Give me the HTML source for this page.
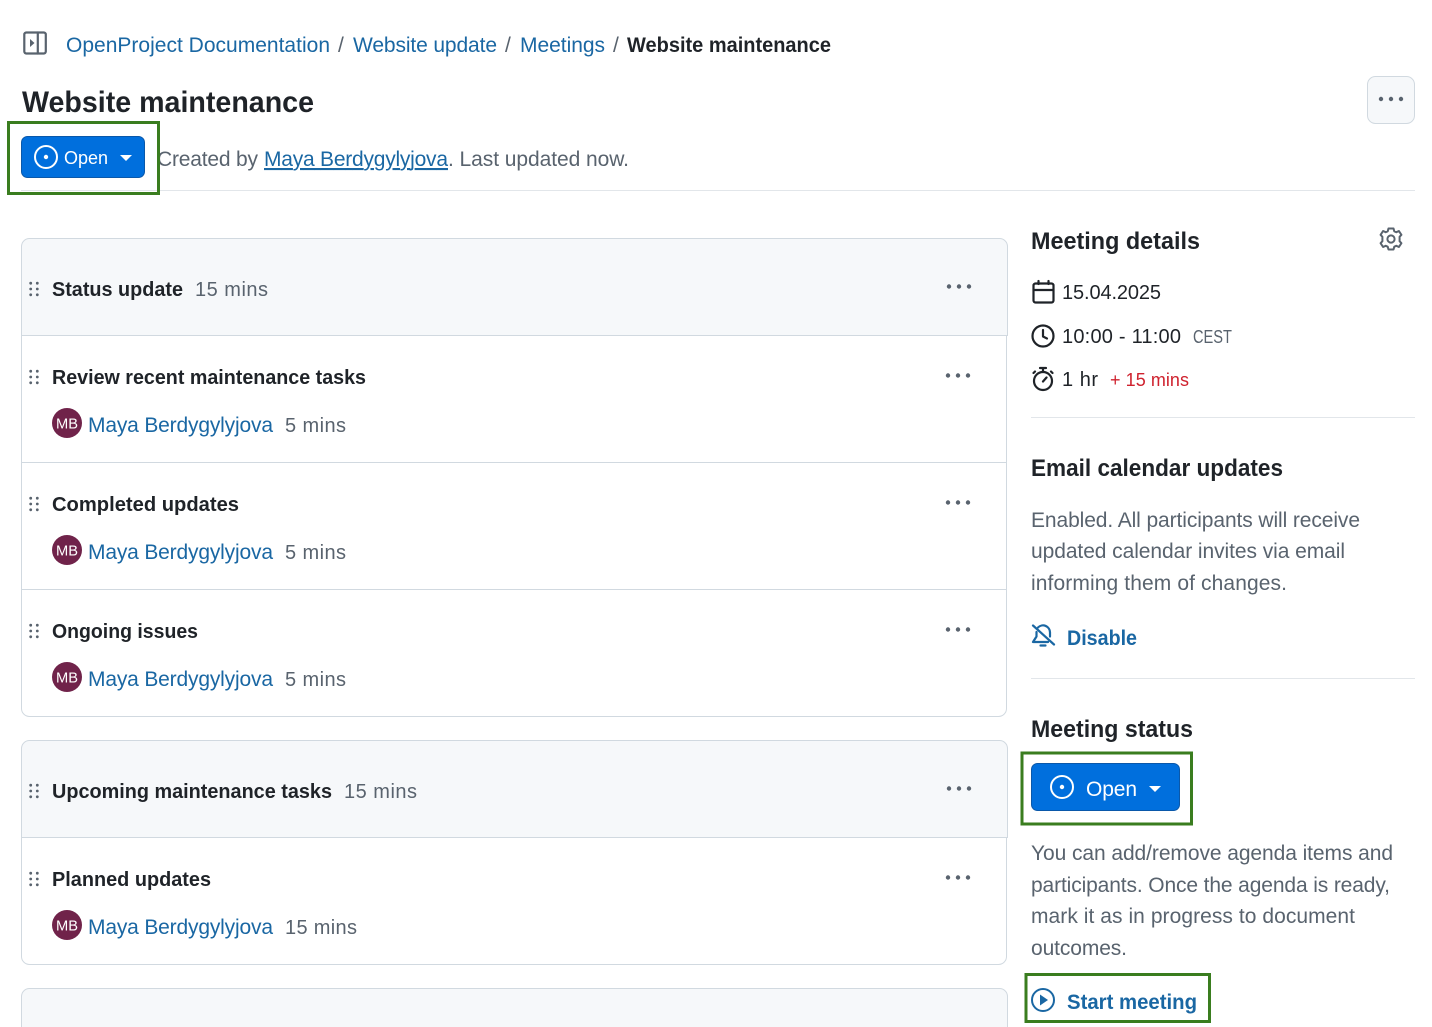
<!DOCTYPE html>
<html lang="en"><head><meta charset="utf-8"><title>Website maintenance</title>
<style>
html,body{margin:0;padding:0;background:#fff;width:1432px;height:1027px;overflow:hidden}
svg{display:block;font-family:"Liberation Sans",sans-serif;font-size:20px}
.l{fill:#1a67a3}.t{fill:#1f2328}.m{fill:#59636e}
.b{font-weight:bold}
.c{fill:none;stroke:#d1d9e0;stroke-width:1}
.i{fill:none;stroke-linecap:round;stroke-linejoin:round}
</style></head><body>
<svg width="1432" height="1027" viewBox="0 0 1432 1027" xmlns="http://www.w3.org/2000/svg">
<defs>
<g id="grip" fill="#59636e"><circle cx="-3.300" cy="-5.800" r="1.400"/><circle cx="3.300" cy="-5.800" r="1.400"/><circle cx="-3.300" cy="0" r="1.400"/><circle cx="3.300" cy="0" r="1.400"/><circle cx="-3.300" cy="5.800" r="1.400"/><circle cx="3.300" cy="5.800" r="1.400"/></g>
<g id="dots" fill="#59636e"><circle cx="-10" cy="0" r="2.200"/><circle cx="0" cy="0" r="2.200"/><circle cx="10" cy="0" r="2.200"/></g>
<g id="av"><circle cx="0" cy="0" r="15" fill="#70234a"/><text x="0" y="5.500" text-anchor="middle" font-size="15" fill="#fff" textLength="22" lengthAdjust="spacingAndGlyphs">MB</text></g>
</defs>

<!-- sidebar toggle -->
<g class="i" stroke="#59636e" stroke-width="2.200"><rect x="24.300" y="32.500" width="21.500" height="21" rx="2"/><path d="M37.800 32.500V53.500"/></g>
<path d="M30 39l4.500 4-4.500 4z" fill="#59636e"/>

<!-- breadcrumb -->
<text x="66" y="52" font-size="21" class="l" textLength="264">OpenProject Documentation</text>
<text x="338" y="52" font-size="21" class="m">/</text>
<text x="353" y="52" font-size="21" class="l" textLength="144">Website update</text>
<text x="505" y="52" font-size="21" class="m">/</text>
<text x="520" y="52" font-size="21" class="l" textLength="85">Meetings</text>
<text x="613" y="52" font-size="21" class="m">/</text>
<text x="627" y="52" font-size="21" class="t b" textLength="204" lengthAdjust="spacingAndGlyphs">Website maintenance</text>

<!-- title -->
<text x="22" y="112" font-size="30" class="t b" textLength="292" lengthAdjust="spacingAndGlyphs">Website maintenance</text>

<!-- more button -->
<rect x="1367.500" y="76.500" width="47" height="47" rx="8" fill="#f6f8fa" stroke="#d1d9e0"/>
<use href="#dots" x="1391" y="99"/>

<!-- open button top -->
<rect x="21.500" y="136.500" width="123" height="41" rx="6" fill="#006fdd" stroke="#0a58aa"/>
<circle cx="46" cy="157" r="11" class="i" stroke="#fff" stroke-width="2"/><circle cx="46" cy="157" r="2.200" fill="#fff"/>
<text x="64" y="164" font-size="18" fill="#fff" textLength="44">Open</text>
<path d="M120 155h12l-6 6z" fill="#fff"/>

<!-- meta -->
<text x="157" y="166" class="m" font-size="21" textLength="101">Created by</text>
<text x="264" y="166" class="l" font-size="21" textLength="184" text-decoration="underline">Maya Berdygylyjova</text>
<text x="448" y="166" class="m" font-size="21" textLength="181">. Last updated now.</text>
<rect x="21" y="190" width="1394" height="1" fill="#e2e6ea"/>

<!-- green boxes -->
<g fill="none" stroke="#3a7d1f" stroke-width="3">
<rect x="8.500" y="122.500" width="150" height="71"/>
<rect x="1022" y="753" width="169.500" height="71"/>
<rect x="1026" y="974.500" width="183.500" height="47"/>
</g>

<!-- card 1 -->
<path d="M21.500 335.500V246.500a8 8 0 0 1 8-8H999.500a8 8 0 0 1 8 8V335.500z" fill="#f6f8fa" stroke="#d1d9e0"/>
<path d="M21.500 336V708.500a8 8 0 0 0 8 8H998.500a8 8 0 0 0 8-8V336" class="c"/>
<path d="M22 462.500H1006M22 589.500H1006" class="c"/>
<use href="#grip" x="34" y="289"/>
<text x="52" y="296" class="t b" textLength="131" lengthAdjust="spacingAndGlyphs">Status update</text>
<text x="195" y="296" class="m" textLength="73">15 mins</text>
<use href="#dots" x="959" y="286.500"/>

<use href="#grip" x="34" y="377"/>
<text x="52" y="384" class="t b" textLength="314" lengthAdjust="spacingAndGlyphs">Review recent maintenance tasks</text>
<use href="#dots" x="958" y="375.500"/>
<use href="#av" x="67" y="423"/>
<text x="88" y="432" font-size="21" class="l" textLength="185">Maya Berdygylyjova</text>
<text x="285" y="432" class="m" textLength="61">5 mins</text>

<use href="#grip" x="34" y="504"/>
<text x="52" y="511" class="t b" textLength="187" lengthAdjust="spacingAndGlyphs">Completed updates</text>
<use href="#dots" x="958" y="502.500"/>
<use href="#av" x="67" y="550"/>
<text x="88" y="559" font-size="21" class="l" textLength="185">Maya Berdygylyjova</text>
<text x="285" y="559" class="m" textLength="61">5 mins</text>

<use href="#grip" x="34" y="631"/>
<text x="52" y="638" class="t b" textLength="146" lengthAdjust="spacingAndGlyphs">Ongoing issues</text>
<use href="#dots" x="958" y="629.500"/>
<use href="#av" x="67" y="677"/>
<text x="88" y="686" font-size="21" class="l" textLength="185">Maya Berdygylyjova</text>
<text x="285" y="686" class="m" textLength="61">5 mins</text>

<!-- card 2 -->
<path d="M21.500 837.500V748.500a8 8 0 0 1 8-8H999.500a8 8 0 0 1 8 8V837.500z" fill="#f6f8fa" stroke="#d1d9e0"/>
<path d="M21.500 838V956.500a8 8 0 0 0 8 8H998.500a8 8 0 0 0 8-8V838" class="c"/>
<use href="#grip" x="34" y="791"/>
<text x="52" y="798" class="t b" textLength="280" lengthAdjust="spacingAndGlyphs">Upcoming maintenance tasks</text>
<text x="344" y="798" class="m" textLength="73">15 mins</text>
<use href="#dots" x="959" y="788.500"/>
<use href="#grip" x="34" y="879"/>
<text x="52" y="886" class="t b" textLength="159" lengthAdjust="spacingAndGlyphs">Planned updates</text>
<use href="#dots" x="958" y="877.500"/>
<use href="#av" x="67" y="925"/>
<text x="88" y="934" font-size="21" class="l" textLength="185">Maya Berdygylyjova</text>
<text x="285" y="934" class="m" textLength="72">15 mins</text>

<!-- card 3 -->
<path d="M21.500 1028V996.500a8 8 0 0 1 8-8H999.500a8 8 0 0 1 8 8V1028z" fill="#f6f8fa" stroke="#d1d9e0"/>

<!-- sidebar -->
<text x="1031" y="249" font-size="24" class="t b" textLength="169" lengthAdjust="spacingAndGlyphs">Meeting details</text>
<g class="i" stroke="#59636e" stroke-width="2" transform="translate(1391 239)">
<circle r="3.600"/>
<path d="M-2.500-10.500h5l.8 2.800 2 .9 2.600-1.200 2.500 3.800-1.800 2v4.400l1.800 2-2.500 3.800-2.600-1.200-2 .9-.8 2.800h-5l-.8-2.800-2-.9-2.600 1.200-2.500-3.800 1.800-2v-4.400l-1.800-2 2.500-3.800 2.600 1.200 2-.9z"/>
</g>

<g class="i" stroke="#1f2328" stroke-width="2.200"><rect x="1033.500" y="283.500" width="20" height="19" rx="2"/><path d="M1033.500 290H1053.500M1038.500 281V284M1048.500 281V284"/></g>
<text x="1062" y="299" class="t" textLength="99">15.04.2025</text>
<circle cx="1043" cy="336" r="10.500" class="i" stroke="#1f2328" stroke-width="2.200"/>
<path d="M1043 330v6.500l4 2" class="i" stroke="#1f2328" stroke-width="2.200"/>
<text x="1062" y="343" class="t" textLength="119">10:00 - 11:00</text>
<text x="1193" y="343" font-size="18" class="m" textLength="39" lengthAdjust="spacingAndGlyphs">CEST</text>
<circle cx="1043" cy="381" r="9" class="i" stroke="#1f2328" stroke-width="2.200"/>
<path d="M1040 368h6M1043 368v3.500M1051 371.500l1.500 1.500M1035 371.500l-1.500 1.500M1043 381.500l3.500-4" class="i" stroke="#1f2328" stroke-width="2.200"/>
<text x="1062" y="386" class="t" textLength="36">1 hr</text>
<text x="1110" y="386" font-size="18" fill="#cf222e" textLength="79">+ 15 mins</text>
<rect x="1031" y="417" width="384" height="1" fill="#e2e6ea"/>

<text x="1031" y="476" font-size="24" class="t b" textLength="252" lengthAdjust="spacingAndGlyphs">Email calendar updates</text>
<text x="1031" y="527" font-size="21" class="m" textLength="329">Enabled. All participants will receive</text>
<text x="1031" y="558" font-size="21" class="m" textLength="314">updated calendar invites via email</text>
<text x="1031" y="590" font-size="21" class="m" textLength="256">informing them of changes.</text>

<g class="i" stroke="#1a67a3" stroke-width="2.200"><path d="M1033 625.500l21 19M1038 627.500a7 7 0 0 1 12 5v4M1036.500 632v4.500l-3.500 5.500h15"/><path d="M1040.500 645.500h5"/></g>
<text x="1067" y="645" font-size="21" class="l b" textLength="70" lengthAdjust="spacingAndGlyphs">Disable</text>
<rect x="1031" y="678" width="384" height="1" fill="#e2e6ea"/>

<text x="1031" y="737" font-size="24" class="t b" textLength="162" lengthAdjust="spacingAndGlyphs">Meeting status</text>

<rect x="1031.500" y="763.500" width="148" height="47" rx="6" fill="#006fdd" stroke="#0a58aa"/>
<circle cx="1062" cy="787" r="11" class="i" stroke="#fff" stroke-width="2"/><circle cx="1062" cy="787" r="2.200" fill="#fff"/>
<text x="1086" y="796" font-size="21" fill="#fff" textLength="51">Open</text>
<path d="M1149 786h12l-6 6z" fill="#fff"/>

<text x="1031" y="860" font-size="21" class="m" textLength="362">You can add/remove agenda items and</text>
<text x="1031" y="892" font-size="21" class="m" textLength="359">participants. Once the agenda is ready,</text>
<text x="1031" y="923" font-size="21" class="m" textLength="324">mark it as in progress to document</text>
<text x="1031" y="955" font-size="21" class="m" textLength="96">outcomes.</text>

<circle cx="1043" cy="1000" r="11" class="i" stroke="#1a67a3" stroke-width="2"/>
<path d="M1040 994.500l8 5.500-8 5.500z" fill="#1a67a3"/>
<text x="1067" y="1009" font-size="21" class="l b" textLength="130" lengthAdjust="spacingAndGlyphs">Start meeting</text>
</svg>
</body></html>
